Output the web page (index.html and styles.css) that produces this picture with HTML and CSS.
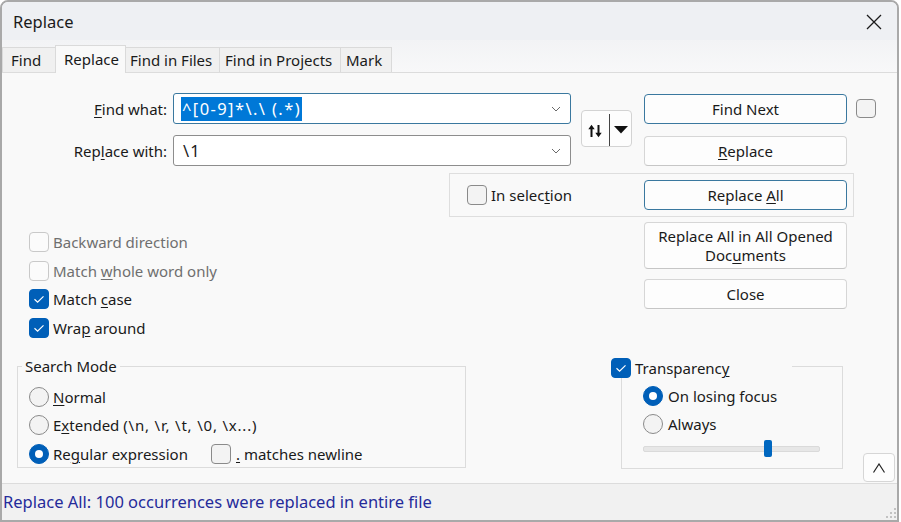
FILE: index.html
```html
<!DOCTYPE html>
<html>
<head>
<meta charset="utf-8">
<title>Replace</title>
<link rel="stylesheet" href="styles.css">
</head>
<body>
<div class="window">
  <div class="titlebar">
    <span class="title">Replace</span>
    <svg class="close" width="16" height="16" viewBox="0 0 16 16"><path d="M1 1L15 15M15 1L1 15" stroke="#1b1b1b" stroke-width="1.3" fill="none"/></svg>
  </div>
  <div class="tabbar">
    <div class="tab t-find">Find</div>
    <div class="tab active t-replace">Replace</div>
    <div class="tab t-files">Find in Files</div>
    <div class="tab t-proj">Find in Projects</div>
    <div class="tab t-mark">Mark</div>
  </div>
  <div class="content">
    <div class="row1">
      <div class="fields">
        <span class="lbl"><u>F</u>ind what:</span>
        <div class="combo focus"><span class="sel">^[0-9]*\.\ (.*)</span><svg class="chev" width="10" height="6" viewBox="0 0 10 6"><path d="M1 1L5 5L9 1" stroke="#6a6a6a" stroke-width="1" fill="none"/></svg></div>
        <span class="lbl">Rep<u>l</u>ace with:</span>
        <div class="combo"><span class="val">\1</span><svg class="chev" width="10" height="6" viewBox="0 0 10 6"><path d="M1 1L5 5L9 1" stroke="#6a6a6a" stroke-width="1" fill="none"/></svg></div>
      </div>
      <div class="swap">
        <svg class="arrows" width="14" height="14" viewBox="0 0 14 14"><path d="M3.5 13V3M10.5 1V11" stroke="#111" stroke-width="2" fill="none"/><path d="M0.3 5.2L3.5 0.8L6.7 5.2Z M7.3 8.8L10.5 13.2L13.7 8.8Z" fill="#111"/></svg>
        <span class="divider"></span>
        <svg class="tri" width="14" height="8" viewBox="0 0 14 8"><path d="M0 0H14L7 7.5Z" fill="#111"/></svg>
      </div>
      <div class="btncol">
        <div class="btn default"><span>Find Next</span></div>
        <div class="btn"><span><u>R</u>eplace</span></div>
      </div>
      <span class="cb plain small-cb"></span>
    </div>

    <div class="selframe">
      <div class="check"><span class="cb plain"></span><span>In selec<u>t</u>ion</span></div>
      <div class="btn default wide"><span>Replace <u>A</u>ll</span></div>
    </div>

    <div class="row3">
      <div class="opts">
        <div class="check disabled"><span class="cb"></span><span>Backward direction</span></div>
        <div class="check disabled"><span class="cb"></span><span>Match <u>w</u>hole word only</span></div>
        <div class="check"><span class="cb on"><svg width="20" height="20" viewBox="0 0 20 20"><path d="M5.5 10.2L8.6 13.2L14.5 7.3" stroke="#fff" stroke-width="1.2" fill="none"/></svg></span><span>Match <u>c</u>ase</span></div>
        <div class="check"><span class="cb on"><svg width="20" height="20" viewBox="0 0 20 20"><path d="M5.5 10.2L8.6 13.2L14.5 7.3" stroke="#fff" stroke-width="1.2" fill="none"/></svg></span><span>Wra<u>p</u> around</span></div>
      </div>
      <div class="btncol2">
        <div class="btn tall"><span>Replace All in All Opened<br>Doc<u>u</u>ments</span></div>
        <div class="btn"><span>Close</span></div>
      </div>
    </div>

    <div class="row4">
      <div class="group search">
        <div class="gtitle">Search Mode</div>
        <div class="radios">
          <div class="radio-row"><span class="rd"></span><span><u>N</u>ormal</span></div>
          <div class="radio-row"><span class="rd"></span><span>E<u>x</u>tended <span class="esc">(\n, \r, \t, \0, \x...)</span></span></div>
          <div class="radio-row">
            <div class="radio-item"><span class="rd on"></span><span>Re<u>g</u>ular expression</span></div>
            <div class="check nl"><span class="cb plain"></span><span><u>.</u> matches newline</span></div>
          </div>
        </div>
      </div>
      <div class="group trans">
        <div class="ttitle"><span class="cb on"><svg width="20" height="20" viewBox="0 0 20 20"><path d="M5.5 10.2L8.6 13.2L14.5 7.3" stroke="#fff" stroke-width="1.2" fill="none"/></svg></span><span>Transparenc<u>y</u></span></div>
        <div class="tradios">
          <div class="radio-row"><span class="rd on"></span><span>On losing focus</span></div>
          <div class="radio-row"><span class="rd"></span><span>Always</span></div>
        </div>
        <div class="track"><span class="thumb"></span></div>
      </div>
      <div class="upbtn"><svg width="14" height="10" viewBox="0 0 14 10"><path d="M1.5 9.5L7 1L12.5 9.5" stroke="#222" stroke-width="1.2" fill="none"/></svg></div>
    </div>
  </div>
  <div class="status">
    <span class="msg">Replace All: 100 occurrences were replaced in entire file</span>
    <svg class="grip" width="12" height="12" viewBox="0 0 12 12"><g fill="#c2c2c2"><rect x="9" y="1" width="2" height="2"/><rect x="5" y="5" width="2" height="2"/><rect x="9" y="5" width="2" height="2"/><rect x="1" y="9" width="2" height="2"/><rect x="5" y="9" width="2" height="2"/><rect x="9" y="9" width="2" height="2"/></g></svg>
  </div>
</div>
</body>
</html>
```

FILE: styles.css
```css
* { box-sizing: border-box; }
body {
  margin: 0;
  background: #ffffff;
  font-family: "Noto Sans", "DejaVu Sans", sans-serif;
  font-size: 15px;
  color: #1a1a1a;
}
u { text-decoration: underline; text-underline-offset: 2px; text-decoration-thickness: 1px; }

.window {
  width: 899px;
  height: 522px;
  border: 2px solid #a9a9a9;
  border-radius: 8px 8px 0 0;
  overflow: hidden;
  background: #f9f9f9;
  display: flex;
  flex-direction: column;
}

.titlebar {
  height: 38px;
  flex: none;
  background: #eef0f3;
  display: flex;
  align-items: center;
  justify-content: space-between;
  padding: 2px 15px 0 11px;
}
.title { font-size: 16.5px; line-height: 20px; color: #1a1a1a; }
.close { display: block; }

.tabbar {
  height: 33px;
  flex: none;
  background: linear-gradient(#f2f3f5, #f8f8f9);
  border-bottom: 1px solid #dcdcdc;
  display: flex;
  align-items: flex-end;
}
.tab {
  height: 25px;
  line-height: 25px;
  border: 1px solid #dadada;
  border-bottom: none;
  background: #f0f0f0;
  padding-left: 7px;
  white-space: nowrap;
  margin-left: -1px;
}
.t-find { width: 54px; margin-left: 0; padding-left: 8px; }
.t-replace { width: 71px; padding-left: 8px; }
.t-files { width: 95px; padding-left: 4px; }
.t-proj { width: 122px; padding-left: 5px; }
.t-mark { width: 52px; padding-left: 5px; }
.tab.active {
  height: 28px;
  margin-bottom: -1px;
  background: #f9f9f9;
  position: relative;
  z-index: 1;
  line-height: 26px;
}

.content {
  height: 410px;
  flex: none;
  display: flex;
  flex-direction: column;
}

/* Row 1 */
.row1 {
  display: flex;
  margin-top: 20px;
  height: 73px;
  flex: none;
}
.fields {
  display: grid;
  grid-template-columns: 165px 398px;
  grid-template-rows: 31px 31px;
  column-gap: 6px;
  row-gap: 11px;
}
.lbl { justify-self: end; align-self: center; line-height: 20px; }
.combo {
  background: #ffffff;
  border: 1px solid #8d8d8d;
  border-radius: 3px;
  display: flex;
  align-items: center;
  padding: 0 9px 0 7px;
  font-size: 16.5px;
}
.combo.focus { border-color: #3a789f; }
.sel {
  background: #0078d7;
  color: #ffffff;
  line-height: 24px;
  height: 24px;
  padding: 0 1px;
  margin-top: 1px;
  letter-spacing: 1.4px;
}
.val { line-height: 20px; margin-left: 2px; letter-spacing: 1px; }
.chev { margin-left: auto; display: block; }

.swap {
  width: 51px;
  height: 37px;
  margin: 17px 0 0 10px;
  background: #fdfdfd;
  border: 1px solid #d3d3d3;
  border-radius: 4px;
  display: flex;
  align-items: center;
  padding-left: 6px;
}
.arrows { display: block; margin-top: 5px; }
.divider { width: 1px; height: 32px; background: #444; margin-left: 7px; margin-top: 2px; }
.tri { display: block; margin-left: 4px; margin-top: 2px; }

.btncol {
  width: 203px;
  margin: 1px 0 0 12px;
  display: flex;
  flex-direction: column;
  gap: 12px;
}
.btn {
  height: 30px;
  background: #fdfdfd;
  border: 1px solid #d6d6d6;
  border-bottom-color: #c6c6c6;
  border-radius: 4px;
  display: flex;
  align-items: center;
  justify-content: center;
  text-align: center;
  line-height: 19px;
}
.btn.default { border-color: #3a789f; }
.btn.wide { width: 203px; margin-left: auto; margin-right: 6px; }
.btn.tall { height: 47px; }

.cb {
  width: 20px;
  height: 20px;
  flex: none;
  border-radius: 4px;
  border: 1px solid #c9c9c9;
  background: #fbfbfb;
  display: block;
}
.cb svg { display: block; margin: -1px; }
.cb.plain { border-color: #8a8a8a; background: #f3f3f3; }
.cb.on { border-color: #005fb8; background: #005fb8; }
.small-cb { margin: 6px 0 0 9px; height: 19px; }

/* Row 2 */
.selframe {
  margin: 7px 0 0 447px;
  width: 405px;
  height: 44px;
  flex: none;
  border: 1px solid #dedede;
  display: flex;
  align-items: center;
  padding-left: 17px;
}
.check { display: flex; align-items: center; gap: 4px; line-height: 20px; }
.check.disabled { color: #6f6f6f; }

/* Row 3 */
.row3 { height: 140px; flex: none; display: flex; }
.opts {
  width: 642px;
  padding: 11px 0 0 27px;
  display: flex;
  flex-direction: column;
}
.opts .check { height: 28.5px; }
.btncol2 {
  width: 203px;
  margin-top: 5px;
  display: flex;
  flex-direction: column;
  gap: 10px;
}

/* Row 4 */
.row4 { height: 126px; flex: none; display: flex; align-items: flex-start; }
.group { border: 1px solid #dcdcdc; margin-top: 9px; }
.search { width: 449px; height: 102px; margin-left: 15px; }
.gtitle {
  margin: -11px 0 0 4px;
  padding: 0 3px;
  width: fit-content;
  background: #f9f9f9;
  line-height: 20px;
}
.radios { padding-left: 11px; margin-top: 7px; }
.radio-row { display: flex; align-items: center; gap: 4px; height: 28.3px; line-height: 20px; }
.radio-item { display: flex; align-items: center; gap: 4px; width: 178px; flex: none; }
.esc { letter-spacing: 0.8px; }
.nl { gap: 5px; }
.rd {
  width: 20px;
  height: 20px;
  flex: none;
  border-radius: 50%;
  border: 1px solid #8a8a8a;
  background: #f3f3f3;
  display: flex;
  align-items: center;
  justify-content: center;
}
.rd.on { border-color: #005fb8; background: #005fb8; }
.rd.on::after {
  content: "";
  width: 8px;
  height: 8px;
  border-radius: 50%;
  background: #ffffff;
}

.trans { width: 222px; height: 103px; margin-left: 155px; }
.ttitle {
  margin: -9px 0 0 -11px;
  width: 181px;
  background: #f9f9f9;
  display: flex;
  align-items: center;
  gap: 4px;
  line-height: 20px;
}
.tradios { padding-left: 21px; margin-top: 4px; }
.tradios .radio-row { height: 28px; gap: 5px; }
.track {
  position: relative;
  margin: 8px 0 0 21px;
  width: 177px;
  height: 6px;
  background: #e7e7e7;
  border: 1px solid #dadada;
  border-radius: 2px;
}
.thumb {
  position: absolute;
  left: 120px;
  top: -7px;
  width: 8px;
  height: 17px;
  background: #0067c0;
  border-radius: 2px;
}

.upbtn {
  width: 32px;
  height: 29px;
  margin: 0 0 1px 20px;
  align-self: flex-end;
  background: #fdfdfd;
  border: 1px solid #d6d6d6;
  border-radius: 4px;
  display: flex;
  align-items: center;
  justify-content: center;
}
.upbtn svg { display: block; }

.status {
  flex: 1;
  border-top: 1px solid #dcdcdc;
  background: #f1f1f1;
  display: flex;
  align-items: center;
  padding-left: 1px;
}
.msg { color: #252b9a; line-height: 20px; font-size: 16.5px; }
.grip { margin-left: auto; align-self: flex-end; margin-bottom: 1px; display: block; }
```
